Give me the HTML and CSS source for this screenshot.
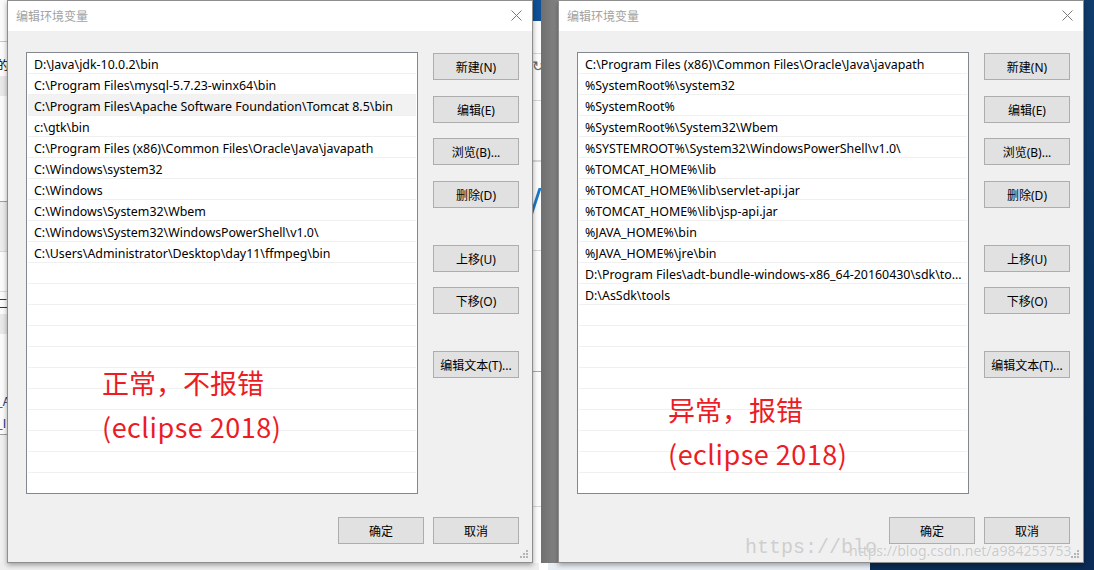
FILE: index.html
```html
<!DOCTYPE html>
<html lang="zh-CN">
<head>
<meta charset="utf-8">
<title>编辑环境变量</title>
<link rel="stylesheet" href="styles.css">
</head>
<body>
<div class="desktop">
  <div class="bgwin bgwin-left">
    <div class="bl-top"></div>
    <div class="bl-text">的</div>
    <div class="bl-band"></div>
    <div class="bl-white1"></div>
    <div class="bl-band2"></div>
    <div class="bl-white2"></div>
    <div class="bl-u">二_</div>
    <div class="bl-band3"></div>
    <div class="bl-white3"></div>
    <div class="bl-u">_A</div>
    <div class="bl-u">_I</div>
    <div class="bl-white4"></div>
  </div>
  <div class="bgwin bgwin-mid">
    <div class="bm-title"></div>
    <div class="bm-row bm-r1"></div>
    <div class="bm-row bm-r2"><span class="bm-glyph">↻</span></div>
    <div class="bm-row bm-r3"></div>
    <div class="bm-row bm-r4"></div>
    <div class="bm-row bm-r5"><span class="bm-n"></span></div>
    <div class="bm-row bm-r6"></div>
    <div class="bm-row bm-r7"></div>
    <div class="bm-row bm-r8"></div>
  </div>
  <div class="bgwin bgwin-gray"></div>
  <div class="bgwin bgwin-bottom"></div>

  <section class="dialog dlg-a">
    <header class="titlebar">
      <span class="title">编辑环境变量</span>
      <svg class="close" width="11" height="11" viewBox="0 0 11 11"><path d="M0.5 0.5 L10.5 10.5 M10.5 0.5 L0.5 10.5" stroke="#7a7a7a" stroke-width="1" fill="none"/></svg>
    </header>
    <div class="body">
      <div class="list">
        <div class="row">D:\Java\jdk-10.0.2\bin</div>
        <div class="row">C:\Program Files\mysql-5.7.23-winx64\bin</div>
        <div class="row hover">C:\Program Files\Apache Software Foundation\Tomcat 8.5\bin</div>
        <div class="row">c:\gtk\bin</div>
        <div class="row">C:\Program Files (x86)\Common Files\Oracle\Java\javapath</div>
        <div class="row">C:\Windows\system32</div>
        <div class="row">C:\Windows</div>
        <div class="row">C:\Windows\System32\Wbem</div>
        <div class="row">C:\Windows\System32\WindowsPowerShell\v1.0\</div>
        <div class="row">C:\Users\Administrator\Desktop\day11\ffmpeg\bin</div>
        <div class="row"></div><div class="row"></div><div class="row"></div><div class="row"></div>
        <div class="row"></div><div class="row"></div><div class="row"></div><div class="row"></div>
        <div class="row"></div><div class="row"></div><div class="row"></div>
      </div>
      <div class="actions">
        <div class="btn">新建(N)</div>
        <div class="btn m16">编辑(E)</div>
        <div class="btn">浏览(B)...</div>
        <div class="btn m16">删除(D)</div>
        <div class="btn m37">上移(U)</div>
        <div class="btn">下移(O)</div>
        <div class="btn m37">编辑文本(T)...</div>
      </div>
      <div class="footer">
        <div class="btn">确定</div>
        <div class="btn">取消</div>
      </div>
      <div class="note note-a">
        <div class="note-line">正常，不报错</div>
        <div class="note-line latin">(eclipse 2018)</div>
      </div>
    </div>
    <svg class="grip" width="9" height="9" viewBox="0 0 9 9" fill="#b5b5b5"><rect x="6" y="0" width="2" height="2"/><rect x="3" y="3" width="2" height="2"/><rect x="6" y="3" width="2" height="2"/><rect x="0" y="6" width="2" height="2"/><rect x="3" y="6" width="2" height="2"/><rect x="6" y="6" width="2" height="2"/></svg>
  </section>

  <section class="dialog dlg-b">
    <header class="titlebar">
      <span class="title">编辑环境变量</span>
      <svg class="close" width="11" height="11" viewBox="0 0 11 11"><path d="M0.5 0.5 L10.5 10.5 M10.5 0.5 L0.5 10.5" stroke="#7a7a7a" stroke-width="1" fill="none"/></svg>
    </header>
    <div class="body">
      <div class="list">
        <div class="row">C:\Program Files (x86)\Common Files\Oracle\Java\javapath</div>
        <div class="row">%SystemRoot%\system32</div>
        <div class="row">%SystemRoot%</div>
        <div class="row">%SystemRoot%\System32\Wbem</div>
        <div class="row">%SYSTEMROOT%\System32\WindowsPowerShell\v1.0\</div>
        <div class="row">%TOMCAT_HOME%\lib</div>
        <div class="row">%TOMCAT_HOME%\lib\servlet-api.jar</div>
        <div class="row">%TOMCAT_HOME%\lib\jsp-api.jar</div>
        <div class="row">%JAVA_HOME%\bin</div>
        <div class="row">%JAVA_HOME%\jre\bin</div>
        <div class="row">D:\Program Files\adt-bundle-windows-x86_64-20160430\sdk\tools</div>
        <div class="row">D:\AsSdk\tools</div>
        <div class="row"></div><div class="row"></div><div class="row"></div><div class="row"></div>
        <div class="row"></div><div class="row"></div><div class="row"></div><div class="row"></div>
        <div class="row"></div>
      </div>
      <div class="actions">
        <div class="btn">新建(N)</div>
        <div class="btn m16">编辑(E)</div>
        <div class="btn">浏览(B)...</div>
        <div class="btn m16">删除(D)</div>
        <div class="btn m37">上移(U)</div>
        <div class="btn">下移(O)</div>
        <div class="btn m37">编辑文本(T)...</div>
      </div>
      <div class="footer">
        <div class="btn">确定</div>
        <div class="btn">取消</div>
      </div>
      <div class="note note-b">
        <div class="note-line">异常，报错</div>
        <div class="note-line latin">(eclipse 2018)</div>
      </div>
    </div>
    <svg class="grip" width="9" height="9" viewBox="0 0 9 9" fill="#b5b5b5"><rect x="6" y="0" width="2" height="2"/><rect x="3" y="3" width="2" height="2"/><rect x="6" y="3" width="2" height="2"/><rect x="0" y="6" width="2" height="2"/><rect x="3" y="6" width="2" height="2"/><rect x="6" y="6" width="2" height="2"/></svg>
  </section>

  <div class="watermark">
    <span class="wm-big">https://blo</span>
    <span class="wm-small">https://blog.csdn.net/a984253753</span>
  </div>
</div>
</body>
</html>
```

FILE: styles.css
```css
* { box-sizing: border-box; }

body {
  margin: 0;
  font-family: "Noto Sans", "Noto Sans CJK SC", sans-serif;
  font-size: 12px;
  color: #000;
}

.desktop {
  position: relative;
  width: 1094px;
  height: 570px;
  overflow: hidden;
  background: linear-gradient(180deg, #0f3c6c 0%, #0c3462 50%, #0a2c56 100%);
}

/* ---------- background windows ---------- */
.bgwin { position: absolute; top: 0; }

.bgwin-left {
  left: 0;
  width: 24px;
  height: 570px;
  background: #fbfbfb;
  display: flex;
  flex-direction: column;
  font-size: 12px;
  overflow: hidden;
}
.bl-top { height: 42px; border-bottom: 1px solid #c8c8c8; }
.bl-text { height: 22px; line-height: 22px; margin-top: 12px; margin-left: -3px; font-family: "Noto Sans CJK SC", sans-serif; }
.bl-band { height: 20px; background: #e8e8e8; }
.bl-white1 { height: 106px; border-bottom: 1px solid #a0a0a0; }
.bl-band2 { height: 50px; background: #ececec; border-bottom: 1px solid #d8d8d8; }
.bl-white2 { height: 40px; border-bottom: 1px solid #dcdcdc; }
.bl-u { height: 22px; line-height: 22px; margin-left: -4px; color: #1a3a7a; font-family: "Noto Sans CJK SC", sans-serif; }
.bl-band3 { height: 20px; background: #e8e8e8; }
.bl-white3 { height: 56px; }
.bl-white4 { flex: 1; border-top: 1px solid #a0a0a0; background: #f0f0f0; }

.bgwin-mid {
  left: 520px;
  width: 22px;
  height: 570px;
  background: #fbfbfb;
  display: flex;
  flex-direction: column;
  overflow: hidden;
}
.bm-title { height: 21px; background: #0f5096; }
.bm-row { border-bottom: 1px solid #d6d6d6; position: relative; }
.bm-r1 { height: 33px; }
.bm-r2 { height: 47px; }
.bm-glyph { position: absolute; left: 12px; top: 2px; font-size: 14px; color: #666; }
.bm-r3 { height: 60px; }
.bm-r4 { height: 0; }
.bm-r5 { height: 89px; }
.bm-n {
  position: absolute; left: 14px; top: 26px;
  width: 3px; height: 28px; background: #1a78c8; transform: skewX(-18deg);
}
.bm-r6 { height: 121px; border-bottom-color: #a8a8a8; }
.bm-r7 { height: 135px; }
.bm-r8 { flex: 1; border-bottom: none; }

.bgwin-gray {
  left: 541px;
  width: 17px;
  height: 570px;
  background: linear-gradient(90deg, #6f6f6f, #858585);
}

.bgwin-bottom {
  left: 0;
  top: 563px;
  width: 870px;
  height: 7px;
  background: linear-gradient(90deg, #eeeeee 0%, #eeeeee 62%, #ffffff 62%, #ffffff 63%, #e9eef5 63%, #e9eef5 100%);
}

/* ---------- dialog ---------- */
.dialog {
  position: absolute;
  top: 0;
  width: 526px;
  height: 563px;
  border: 1px solid #8e8e8e;
  background: #f0f0f0;
  display: flex;
  flex-direction: column;
  box-shadow: 0 2px 5px rgba(0, 0, 0, 0.35);
}
.dlg-a { left: 7px; }
.dlg-b { left: 558px; }

.titlebar {
  height: 30px;
  flex: none;
  background: #fff;
  display: flex;
  align-items: center;
  justify-content: space-between;
  padding: 0 10px 1px 8px;
}
.title {
  font-family: "Noto Sans CJK SC", sans-serif;
  font-size: 12px;
  color: #a2a2a2;
}
.close { display: block; }

.body {
  position: relative;
  flex: 1;
  display: grid;
  grid-template-columns: 392px 86px;
  grid-template-rows: 442px 27px;
  column-gap: 15px;
  row-gap: 23px;
  padding: 21px 13px 0 18px;
}

.list {
  border: 1px solid #828790;
  background: #fff;
  overflow: hidden;
  padding: 0 1px;
}
.row {
  height: 21px;
  line-height: 23px;
  border-bottom: 1px solid #f0f0f0;
  padding: 0 3px 0 6px;
  white-space: nowrap;
  overflow: hidden;
  text-overflow: ellipsis;
  font-family: "Noto Sans", "Noto Sans CJK SC", sans-serif;
  font-size: 12.4px;
  color: #000;
}
.row.hover { background: #f2f2f2; }

.actions {
  display: flex;
  flex-direction: column;
  padding-top: 1px;
}
.btn {
  height: 27px;
  flex: none;
  border: 1px solid #adadad;
  background: #e1e1e1;
  display: flex;
  align-items: center;
  justify-content: center;
  font-family: "Noto Sans", "Noto Sans CJK SC", sans-serif;
  font-size: 12px;
  color: #000;
  white-space: nowrap;
}
.actions .btn + .btn { margin-top: 15px; }
.actions .btn.m16 { margin-top: 16px; }
.actions .btn.m37 { margin-top: 37px; }

.footer {
  grid-column: 1 / -1;
  display: flex;
  justify-content: flex-end;
  gap: 9px;
}
.footer .btn { width: 86px; }

.note {
  position: absolute;
  color: #ec1c24;
  font-family: "Noto Sans CJK SC", sans-serif;
  font-size: 27px;
  line-height: 44px;
}
.note .latin { letter-spacing: 0.5px; }
.note-a { left: 94px; top: 330px; }
.note-b { left: 109px; top: 357px; }

.grip {
  position: absolute;
  right: 3px;
  bottom: 3px;
}

/* ---------- watermark ---------- */
.watermark {
  position: absolute;
  left: 745px;
  top: 536px;
  width: 349px;
  height: 30px;
}
.wm-big {
  position: absolute;
  left: 0;
  top: 0;
  font-family: "Liberation Mono", monospace;
  font-size: 20px;
  color: rgba(200, 200, 200, 0.85);
}
.wm-small {
  position: absolute;
  left: 104px;
  top: 5px;
  font-family: "Noto Sans", sans-serif;
  font-size: 14px;
  color: rgba(190, 190, 190, 0.8);
  text-shadow: 0 0 1px #fff;
}
```
